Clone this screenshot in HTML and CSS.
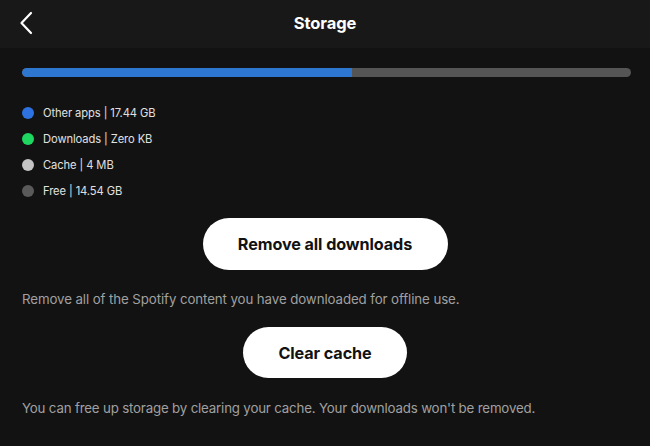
FILE: index.html
```html
<!DOCTYPE html>
<html>
<head>
<meta charset="utf-8">
<link rel="stylesheet" href="styles.css">
</head>
<body>
<div class="page">
  <header class="topbar">
    <button class="back" aria-label="Back">
      <svg width="14" height="24" viewBox="0 0 14 24"><path d="M12 2 L2.5 12 L12 22" fill="none" stroke="#fff" stroke-width="2.2" stroke-linecap="round" stroke-linejoin="round"/></svg>
    </button>
    <h1 class="title">Storage</h1>
  </header>
  <main class="content">
    <div class="bar"><div class="bar-fill" style="width:54.2%"></div></div>
    <ul class="legend">
      <li><span class="dot dot-blue"></span>Other apps | 17.44 GB</li>
      <li><span class="dot dot-green"></span>Downloads | Zero KB</li>
      <li><span class="dot dot-light"></span>Cache | 4 MB</li>
      <li><span class="dot dot-dark"></span>Free | 14.54 GB</li>
    </ul>
    <div class="action">
      <button class="pill pill-wide">Remove all downloads</button>
    </div>
    <p class="note note-1">Remove all of the Spotify content you have downloaded for offline use.</p>
    <div class="action action-2">
      <button class="pill pill-narrow">Clear cache</button>
    </div>
    <p class="note note-2">You can free up storage by clearing your cache. Your downloads won't be removed.</p>
  </main>
</div>
</body>
</html>
```
FILE: styles.css
```css
* { box-sizing: border-box; }
html, body { margin: 0; padding: 0; background: #121212; }
body { font-family: "Inter", "Liberation Sans", sans-serif; color: #fff; }
.page { width: 650px; height: 446px; overflow: hidden; background: #121212; }
.topbar {
  height: 48px;
  background: #181818;
  display: flex;
  align-items: center;
  justify-content: center;
  position: relative;
}
.back {
  position: absolute;
  left: 19px;
  top: 11px;
  background: none;
  border: 0;
  padding: 0;
  display: flex;
}
.title { margin: 0 0 2px; font-size: 16.5px; font-weight: 700; letter-spacing: -0.1px; }
.content { padding: 20px 19px 0 22px; }
.bar { height: 9px; border-radius: 5px; background: #555; overflow: hidden; }
.bar-fill { height: 100%; background: #2e77d0; border-radius: 5px 0 0 5px; }
.legend { list-style: none; margin: 28px 0 0; padding: 0; display: flex; flex-direction: column; gap: 10px; }
.legend li { display: flex; align-items: center; height: 16px; font-size: 11.2px; color: #e0e0e0; letter-spacing: -0.1px; }
.dot { width: 12px; height: 12px; border-radius: 50%; margin-right: 9px; flex: none; }
.dot-blue { background: #2d72e0; }
.dot-green { background: #1ed760; }
.dot-light { background: #c4c4c4; }
.dot-dark { background: #5a5a5a; }
.action { display: flex; justify-content: center; margin-top: 19px; padding-right: 3px; }
.action-2 { margin-top: 20px; }
.pill {
  background: #fff;
  color: #121212;
  border: 0;
  border-radius: 26px;
  height: 52px;
  font-family: inherit;
  font-size: 16.2px;
  font-weight: 700;
  letter-spacing: -0.1px;
}
.pill-wide { width: 245px; }
.pill-narrow { width: 164px; height: 51px; }
.note { margin: 21px 0 0; font-size: 13.3px; color: #a0a0a0; letter-spacing: -0.1px; line-height: 16px; }
.note-2 { margin-top: 22px; letter-spacing: -0.18px; }
```
